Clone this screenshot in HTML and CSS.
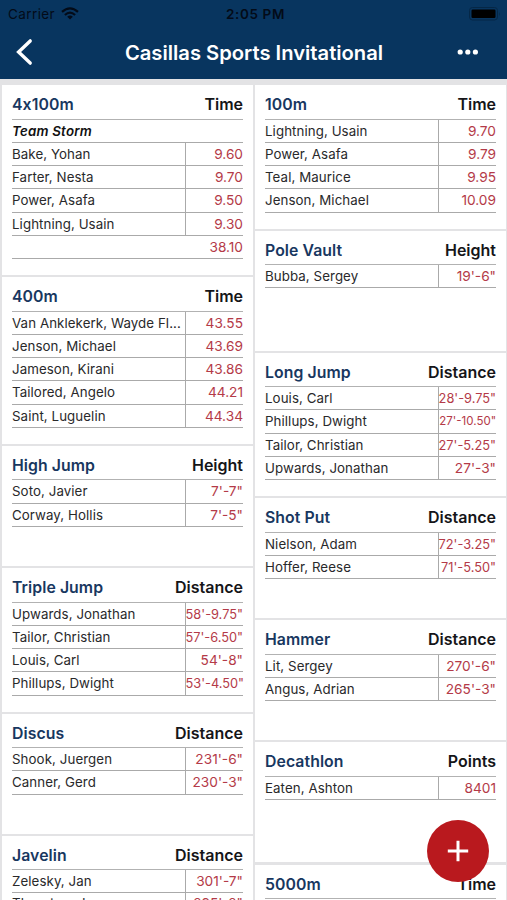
FILE: index.html
```html
<!DOCTYPE html>
<html lang="en">
<head>
<meta charset="utf-8">
<title>Casillas Sports Invitational</title>
<link rel="stylesheet" href="styles.css">
</head>
<body>
<header class="top">
  <div class="status">
    <div class="carrier"><span>Carrier</span>
      <svg width="18" height="13" viewBox="0 0 18 13"><g fill="none" stroke="#030b18" stroke-width="2.2"><path d="M1 4.9Q9-2.3 17 4.9"/><path d="M3.9 8Q9 3.4 14.1 8"/></g><path d="M6.2 9.7Q9 7.2 11.8 9.7L9 12.6Z" fill="#030b18"/></svg>
    </div>
    <span class="clock">2:05 PM</span>
    <svg class="battery" width="32" height="14" viewBox="0 0 32 14"><rect x=".5" y=".5" width="28" height="12.5" rx="3" fill="none" stroke="#052746"/><rect x="2.5" y="2.5" width="24" height="8.5" rx="1.2" fill="#000"/><path d="M30 5v4q1.5-2 0-4Z" fill="#052746"/></svg>
  </div>
  <nav class="nav">
    <svg class="back" width="18" height="28" viewBox="0 0 18 28"><path d="M15.2 2.9 3.6 14l11.6 11.1" fill="none" stroke="#fff" stroke-width="3.4" stroke-linecap="round" stroke-linejoin="miter"/></svg>
    <h1>Casillas Sports Invitational</h1>
    <svg class="more" width="22" height="6" viewBox="0 0 22 6" fill="#fff"><circle cx="3.2" cy="3" r="2.6"/><circle cx="10.8" cy="3" r="2.6"/><circle cx="18.4" cy="3" r="2.6"/></svg>
  </nav>
</header>
<main class="board">
  <div class="column">
    <section class="card"><div class="head"><h2>4x100m</h2><b>Time</b></div>
      <div class="row team"><span>Team Storm</span></div>
      <div class="row"><span>Bake, Yohan</span><i>9.60</i></div>
      <div class="row"><span>Farter, Nesta</span><i>9.70</i></div>
      <div class="row"><span>Power, Asafa</span><i>9.50</i></div>
      <div class="row"><span>Lightning, Usain</span><i>9.30</i></div>
      <div class="row total"><span></span><i>38.10</i></div>
    </section>
    <section class="card"><div class="head"><h2>400m</h2><b>Time</b></div>
      <div class="row"><span>Van Anklekerk, Wayde Fl...</span><i>43.55</i></div>
      <div class="row"><span>Jenson, Michael</span><i>43.69</i></div>
      <div class="row"><span>Jameson, Kirani</span><i>43.86</i></div>
      <div class="row"><span>Tailored, Angelo</span><i>44.21</i></div>
      <div class="row"><span>Saint, Luguelin</span><i>44.34</i></div>
    </section>
    <section class="card"><div class="head"><h2>High Jump</h2><b>Height</b></div>
      <div class="row"><span>Soto, Javier</span><i>7'-7"</i></div>
      <div class="row"><span>Corway, Hollis</span><i>7'-5"</i></div>
    </section>
    <section class="card"><div class="head"><h2>Triple Jump</h2><b>Distance</b></div>
      <div class="row"><span>Upwards, Jonathan</span><i class="fit">58'-9.75"</i></div>
      <div class="row"><span>Tailor, Christian</span><i class="fit">57'-6.50"</i></div>
      <div class="row"><span>Louis, Carl</span><i>54'-8"</i></div>
      <div class="row"><span>Phillups, Dwight</span><i class="fit">53'-4.50"</i></div>
    </section>
    <section class="card"><div class="head"><h2>Discus</h2><b>Distance</b></div>
      <div class="row"><span>Shook, Juergen</span><i>231'-6"</i></div>
      <div class="row"><span>Canner, Gerd</span><i>230'-3"</i></div>
    </section>
    <section class="card"><div class="head"><h2>Javelin</h2><b>Distance</b></div>
      <div class="row"><span>Zelesky, Jan</span><i>301'-7"</i></div>
      <div class="row cut"><span>Thornton, Jon</span><i>295'-2"</i></div>
    </section>
  </div>
  <div class="column">
    <section class="card"><div class="head"><h2>100m</h2><b>Time</b></div>
      <div class="row"><span>Lightning, Usain</span><i>9.70</i></div>
      <div class="row"><span>Power, Asafa</span><i>9.79</i></div>
      <div class="row"><span>Teal, Maurice</span><i>9.95</i></div>
      <div class="row"><span>Jenson, Michael</span><i>10.09</i></div>
    </section>
    <section class="card"><div class="head"><h2>Pole Vault</h2><b>Height</b></div>
      <div class="row"><span>Bubba, Sergey</span><i>19'-6"</i></div>
    </section>
    <section class="card"><div class="head"><h2>Long Jump</h2><b>Distance</b></div>
      <div class="row"><span>Louis, Carl</span><i class="fit">28'-9.75"</i></div>
      <div class="row"><span>Phillups, Dwight</span><i class="fit small">27'-10.50"</i></div>
      <div class="row"><span>Tailor, Christian</span><i class="fit">27'-5.25"</i></div>
      <div class="row"><span>Upwards, Jonathan</span><i>27'-3"</i></div>
    </section>
    <section class="card"><div class="head"><h2>Shot Put</h2><b>Distance</b></div>
      <div class="row"><span>Nielson, Adam</span><i class="fit">72'-3.25"</i></div>
      <div class="row"><span>Hoffer, Reese</span><i class="fit">71'-5.50"</i></div>
    </section>
    <section class="card"><div class="head"><h2>Hammer</h2><b>Distance</b></div>
      <div class="row"><span>Lit, Sergey</span><i>270'-6"</i></div>
      <div class="row"><span>Angus, Adrian</span><i>265'-3"</i></div>
    </section>
    <section class="card"><div class="head"><h2>Decathlon</h2><b>Points</b></div>
      <div class="row"><span>Eaten, Ashton</span><i>8401</i></div>
    </section>
    <section class="card"><div class="head"><h2>5000m</h2><b>Time</b></div></section>
  </div>
</main>
<button class="add" aria-label="Add"><svg width="22" height="22" viewBox="0 0 22 22"><path d="M11 .8v20.4M.8 11h20.4" stroke="#fff" stroke-width="3"/></svg></button>
</body>
</html>
```
FILE: styles.css
```css
* { box-sizing: border-box; margin: 0; padding: 0; }
body {
  width: 507px; height: 900px; overflow: hidden;
  display: flex; flex-direction: column;
  background: #e3e3e5;
  font-family: Inter, sans-serif;
}
.top { flex: none; height: 79px; background: #08355f; color: #fff; }
.status {
  height: 27px; padding: 0 6px 0 8px;
  display: grid; grid-template-columns: 1fr auto 1fr; align-items: center;
  color: #030b18; font-size: 13.5px; letter-spacing: .4px;
}
.carrier { display: flex; align-items: center; gap: 6px; }
.clock { font-weight: 600; font-size: 13.5px; letter-spacing: .6px; padding-left: 2px; }
.battery { justify-self: end; }
.nav { height: 50px; padding: 0 28px 0 15px; display: grid; grid-template-columns: 80px 1fr 66px; align-items: center; }
.nav h1 { font-size: 20.2px; font-weight: 600; text-align: center; white-space: nowrap; }
.more { justify-self: end; }
.board {
  flex: 1; min-height: 0; overflow: hidden;
  display: grid; grid-template-columns: repeat(2, minmax(0, 1fr)); gap: 2.5px; padding: 6px 1.5px 0 2px;
}
.column { display: flex; flex-direction: column; gap: 2.1px; min-width: 0; }
.card { flex: none; min-height: 120px; padding: 0 9.5px 16px 10px; background: #fff; }
.head {
  height: 34.5px; padding-top: 10px; border-bottom: 1px solid #b2b2b2;
  display: flex; justify-content: space-between; align-items: baseline;
  font-size: 16px; line-height: 19px; color: #151518;
}
.head h2 { font-size: 15.8px; font-weight: 600; color: #18375f; letter-spacing: .07px; font-feature-settings: "calt" 0; }
.head b { font-weight: 600; }
.row {
  height: 23.25px; border-bottom: 1px solid #aaa;
  display: grid; grid-template-columns: minmax(0, 1fr) 58.5px; align-items: stretch;
  font-size: 13.3px; line-height: 22px; letter-spacing: .08px; color: #29292b; white-space: nowrap;
}
.row i { font-style: normal; color: #b43a48; text-align: right; border-left: 1px solid #aaa; font-size: 13.7px; letter-spacing: 0; }
.row i.fit { font-size: 12.8px; line-height: 23px; }
.row i.small { font-size: 11.5px; }
.row.team { font-weight: 600; font-style: italic; color: #111; letter-spacing: .22px; }
.total i { border-left-color: transparent; }
.row.cut { line-height: 21px; }
.add {
  position: fixed; left: 427px; top: 820px; width: 62px; height: 62px;
  border: 0; border-radius: 50%; background: #b9191e;
  display: flex; align-items: center; justify-content: center;
}
```
